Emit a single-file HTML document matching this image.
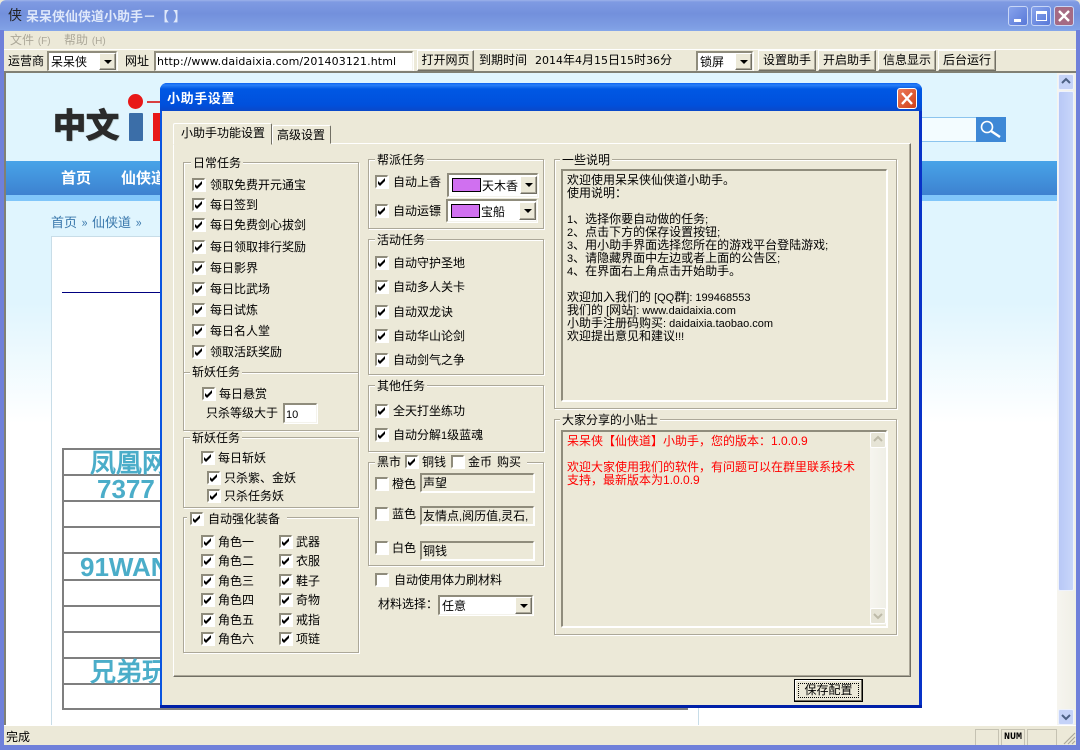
<!DOCTYPE html>
<html><head><meta charset="utf-8"><title>呆呆侠仙侠道小助手</title>
<style>
html,body{margin:0;padding:0;width:1080px;height:750px;overflow:hidden;background:#ece9d8}
body{position:relative;font:12px/14px "DejaVu Sans","WenQuanYi Zen Hei","Noto Sans CJK SC",sans-serif;color:#000}
div,span{position:absolute;box-sizing:border-box;white-space:nowrap}
u{text-decoration:none;font-family:"Liberation Sans",sans-serif;font-size:11px;line-height:1px}
.n{text-decoration:none;font-family:"DejaVu Sans",sans-serif;font-size:11px;line-height:1px}
.t{line-height:14px;height:14px}
.c{width:13px;height:13px;background:#fff;border-top:2px solid #8f8c7c;border-left:2px solid #8f8c7c;border-right:1px solid #fff;border-bottom:1px solid #fff;box-shadow:1px 1px 0 #fff}
.k::after{content:"";position:absolute;left:1px;top:1px;width:8px;height:8px;background:#000;clip-path:polygon(0 3px,2px 5px,7px 0,7px 3px,2px 8px,0 6px)}
.g{border:1px solid #aca899;box-shadow:1px 1px 0 #fff,inset 1px 1px 0 #fff}
.l{background:#ece9d8;padding:0 2px;line-height:14px;height:14px}
.b{background:#ece9d8;border:1px solid;border-color:#fff #716f64 #716f64 #fff;box-shadow:inset -1px -1px 0 #aca899;text-align:center;line-height:19px}
.s{background:#fff;border-top:2px solid #8f8c7c;border-left:2px solid #8f8c7c;border-right:1px solid #f4f3ec;border-bottom:1px solid #f4f3ec;box-shadow:1px 1px 0 #fff}
.a{background:#ece9d8;border:1px solid;border-color:#fff #716f64 #716f64 #fff;box-shadow:inset -1px -1px 0 #aca899}
.a::after{content:"";position:absolute;left:50%;top:50%;margin:-2px 0 0 -4px;border:4px solid transparent;border-top:4px solid #000;border-bottom:0}
.i{background:#ece9d8;border-top:2px solid #8f8c7c;border-left:2px solid #8f8c7c;border-right:1px solid #fff;border-bottom:1px solid #fff;box-shadow:1px 1px 0 #fff;line-height:16px;padding-left:1px}
.w{font:bold 26px/26px "Liberation Sans","WenQuanYi Zen Hei",sans-serif;color:#4badc9}
.r{left:62px;width:626px;height:2px;background:#7f7f7f}
</style></head><body>

<!-- window frame -->
<div style="left:0;top:0;width:1080px;height:31px;background:linear-gradient(#9cb2ea 0,#7f9ae2 2px,#7390dc 14px,#7f9fe4 28px,#86a8ea 31px);border-radius:6px 6px 0 0"></div>
<div style="left:0;top:30px;width:4px;height:720px;background:#6f80da"></div>
<div style="left:1076px;top:30px;width:4px;height:720px;background:#6f80da"></div>
<div style="left:0;top:745px;width:1080px;height:5px;background:#6f80da"></div>
<div class="t" style="left:8px;top:9px;font-size:14px;color:#222">侠</div>
<div class="t" style="left:26px;top:9px;font:bold 13px/14px 'WenQuanYi Zen Hei','Noto Sans CJK SC',sans-serif;color:#dfe8fa">呆呆侠仙侠道小助手－<b style="letter-spacing:4px">【】</b></div>
<div style="left:1008px;top:6px;width:20px;height:20px;border:1px solid #c8d6f6;border-radius:3px;background:linear-gradient(135deg,#87a3ec,#5878d8)"><span style="left:5px;top:12px;width:7px;height:3px;background:#fff"></span></div>
<div style="left:1031px;top:6px;width:20px;height:20px;border:1px solid #c8d6f6;border-radius:3px;background:linear-gradient(135deg,#87a3ec,#5878d8)"><span style="left:4px;top:4px;width:11px;height:10px;border:1px solid #fff;border-top:3px solid #fff"></span></div>
<div style="left:1054px;top:6px;width:20px;height:20px;border:1px solid #c8d6f6;border-radius:3px;background:#a56a84"><svg width="18" height="18" style="position:absolute;left:0;top:0"><path d="M4 4L14 14M14 4L4 14" stroke="#fff" stroke-width="2.4"/></svg></div>

<!-- menu -->
<div class="t" style="left:10px;top:33px;color:#aca899">文件 <u style="font-size:10px">(F)</u></div>
<div class="t" style="left:64px;top:33px;color:#aca899">帮助 <u style="font-size:10px">(H)</u></div>
<div style="left:4px;top:49px;width:1072px;height:1px;background:#fff"></div>

<!-- toolbar -->
<div class="t" style="left:8px;top:54px">运营商</div>
<div class="s" style="left:47px;top:51px;width:70px;height:20px"><span class="t" style="left:2px;top:2px">呆呆侠</span><span class="a" style="right:0;top:0;width:17px;height:17px"></span></div>
<div class="t" style="left:125px;top:54px">网址</div>
<div class="s" style="left:154px;top:51px;width:259px;height:20px"><span class="t" style="left:1px;top:2px;font-size:11px;letter-spacing:.1px">http://www.daidaixia.com/201403121.html</span></div>
<div class="b" style="left:417px;top:50px;width:57px;height:21px">打开网页</div>
<div class="t" style="left:479px;top:53px">到期时间</div>
<div class="t" style="left:535px;top:53px"><span class="n" style="position:static">2014</span>年<span class="n" style="position:static">4</span>月<span class="n" style="position:static">15</span>日<span class="n" style="position:static">15</span>时<span class="n" style="position:static">36</span>分</div>
<div class="s" style="left:696px;top:51px;width:57px;height:20px"><span class="t" style="left:2px;top:2px">锁屏</span><span class="a" style="right:0;top:0;width:17px;height:17px"></span></div>
<div class="b" style="left:758px;top:50px;width:58px;height:21px">设置助手</div>
<div class="b" style="left:818px;top:50px;width:58px;height:21px">开启助手</div>
<div class="b" style="left:878px;top:50px;width:58px;height:21px">信息显示</div>
<div class="b" style="left:938px;top:50px;width:58px;height:21px">后台运行</div>

<!-- web page -->
<div style="left:4px;top:71px;width:1072px;height:655px;background:#808074"></div>
<div style="left:6px;top:73px;width:1052px;height:652px;background:linear-gradient(#e0f5fe 0,#e0f5fe 230px,#fff 350px);overflow:hidden">
  <div style="left:-6px;top:-73px;width:1080px;height:750px">
    <div style="left:53px;top:103px;font:bold 33px/40px 'WenQuanYi Zen Hei','Noto Sans CJK SC',sans-serif;color:#2b2b2b;-webkit-text-stroke:1.4px #2b2b2b;text-shadow:1px 1px 1px #9aa">中文</div>
    <div style="left:128px;top:94px;width:15px;height:15px;border-radius:50%;background:#e81818"></div>
    <div style="left:129px;top:113px;width:14px;height:28px;background:#3b6ea8;border-radius:1px"></div>
    <div style="left:147px;top:101px;width:14px;height:2px;background:#d84040"></div>
    <div style="left:153px;top:113px;width:10px;height:28px;background:#e81818"></div>
    <div style="left:920px;top:117px;width:57px;height:25px;background:#f3fcff;border-top:1px solid #8cc4ee;border-bottom:1px solid #8cc4ee"></div>
    <div style="left:976px;top:117px;width:30px;height:25px;background:#3e88d6"><svg width="30" height="25" style="position:absolute;left:0;top:0"><circle cx="11" cy="10" r="5.5" fill="none" stroke="#fff" stroke-width="1.6"/><path d="M15 14L24 20" stroke="#fff" stroke-width="2.4"/></svg></div>
    <div style="left:0;top:161px;width:1080px;height:34px;background:linear-gradient(#48a4e8,#3d82d0)"></div>
    <div style="left:0;top:195px;width:1080px;height:6px;background:#80c6fa"></div>
    <div style="left:61px;top:170px;font:bold 15px/16px 'WenQuanYi Zen Hei','Noto Sans CJK SC',sans-serif;color:#fff">首页</div>
    <div style="left:121px;top:170px;font:bold 15px/16px 'WenQuanYi Zen Hei','Noto Sans CJK SC',sans-serif;color:#fff">仙侠道</div>
    <div style="left:51px;top:214px;font:13px/16px 'WenQuanYi Zen Hei','Noto Sans CJK SC',sans-serif;color:#3a78ac;word-spacing:1.5px">首页 » 仙侠道 »</div>
    <div style="left:51px;top:236px;width:648px;height:490px;background:#fff;border:1px solid #c8dde8"></div>
    <div style="left:62px;top:292px;width:300px;height:1px;background:#000080"></div>
    <div style="left:62px;top:448px;width:2px;height:262px;background:#7f7f7f"></div>
    <div class="r" style="top:448px"></div><div class="r" style="top:474px"></div><div class="r" style="top:500px"></div><div class="r" style="top:526px"></div><div class="r" style="top:552px"></div><div class="r" style="top:579px"></div><div class="r" style="top:605px"></div><div class="r" style="top:631px"></div><div class="r" style="top:657px"></div><div class="r" style="top:683px"></div><div class="r" style="top:708px"></div>
    <div class="w" style="left:90px;top:450px">凤凰网</div>
    <div class="w" style="left:97px;top:476px">7377</div>
    <div class="w" style="left:80px;top:554px">91WAN</div>
    <div class="w" style="left:90px;top:659px">兄弟玩</div>
  </div>
</div>

<!-- main scrollbar -->
<div style="left:1057px;top:73px;width:19px;height:652px;background:linear-gradient(90deg,#f6f5ef,#f0efe6)"></div>
<div style="left:1058px;top:74px;width:16px;height:16px;border:1px solid #eef2fd;border-radius:2px;background:#c5d3f8"><svg width="14" height="14" style="position:absolute;left:0;top:0"><path d="M3 8L7 4L11 8" fill="none" stroke="#4d6185" stroke-width="2"/></svg></div>
<div style="left:1058px;top:91px;width:16px;height:500px;border:1px solid #eef2fd;border-radius:2px;background:linear-gradient(90deg,#b8c8f6,#c8d6fa)"></div>
<div style="left:1058px;top:709px;width:16px;height:16px;border:1px solid #eef2fd;border-radius:2px;background:#c5d3f8"><svg width="14" height="14" style="position:absolute;left:0;top:0"><path d="M3 5L7 9L11 5" fill="none" stroke="#4d6185" stroke-width="2"/></svg></div>

<!-- status bar -->
<div style="left:4px;top:725px;width:1072px;height:1px;background:#fff"></div>
<div class="t" style="left:6px;top:730px">完成</div>
<div style="left:975px;top:729px;width:24px;height:16px;border:1px solid #c5c2b2;border-bottom:0"></div>
<div style="left:1001px;top:729px;width:24px;height:16px;border:1px solid #c5c2b2;border-bottom:0"><span class="t" style="left:2px;top:1px;font:bold 10px/14px 'Liberation Mono',monospace">NUM</span></div>
<div style="left:1027px;top:729px;width:30px;height:16px;border:1px solid #c5c2b2;border-bottom:0"></div>
<svg width="14" height="14" style="position:absolute;left:1062px;top:731px"><path d="M13 2L2 13M13 6L6 13M13 10L10 13" stroke="#aca899" stroke-width="1.2"/></svg>

<!-- dialog -->
<div style="left:160px;top:83px;width:762px;height:625px;background:#0a54e0;border-radius:7px 7px 0 0"></div>
<div style="left:160px;top:83px;width:762px;height:28px;border-radius:7px 7px 0 0;background:linear-gradient(#0a60f0 0,#2a80f8 2px,#0058e4 6px,#0050dc 22px,#0a48c8 28px)"></div>
<div style="left:919px;top:111px;width:3px;height:597px;background:#0832c8"></div>
<div style="left:160px;top:705px;width:762px;height:3px;background:#0020a8"></div>
<div class="t" style="left:167px;top:91px;font:bold 13px/14px 'WenQuanYi Zen Hei','Noto Sans CJK SC',sans-serif;letter-spacing:.6px;color:#fff">小助手设置</div>
<div style="left:897px;top:88px;width:20px;height:21px;border:1px solid #fff;border-radius:3px;background:linear-gradient(135deg,#ec7a58,#d04018)"><svg width="18" height="19" style="position:absolute;left:0;top:0"><path d="M4 4L14 15M14 4L4 15" stroke="#fff" stroke-width="2.4"/></svg></div>
<div style="left:162px;top:111px;width:757px;height:594px;background:#ece9d8"></div>

<!-- tabs -->
<div style="left:173px;top:143px;width:738px;height:534px;background:#ece9d8;border:1px solid;border-color:#fff #716f64 #716f64 #fff;box-shadow:inset -1px -1px 0 #aca899"></div>
<div style="left:272px;top:125px;width:59px;height:19px;background:#ece9d8;border:1px solid;border-color:#fff #716f64 transparent #fff;border-radius:2px 2px 0 0"></div>
<div style="left:173px;top:123px;width:99px;height:22px;background:#ece9d8;border:1px solid;border-color:#fff #716f64 transparent #fff;border-radius:2px 2px 0 0"></div>
<div class="t" style="left:181px;top:126px">小助手功能设置</div>
<div class="t" style="left:277px;top:128px">高级设置</div>

<!-- column 1 -->
<div class="g" style="left:183px;top:162px;width:176px;height:211px"></div>
<div class="l" style="left:191px;top:156px">日常任务</div>
<div class="c k" style="left:192px;top:178px"></div><div class="t" style="left:210px;top:178px">领取免费开元通宝</div>
<div class="c k" style="left:192px;top:198px"></div><div class="t" style="left:210px;top:198px">每日签到</div>
<div class="c k" style="left:192px;top:218px"></div><div class="t" style="left:210px;top:218px">每日免费剑心拔剑</div>
<div class="c k" style="left:192px;top:240px"></div><div class="t" style="left:210px;top:240px">每日领取排行奖励</div>
<div class="c k" style="left:192px;top:261px"></div><div class="t" style="left:210px;top:261px">每日影界</div>
<div class="c k" style="left:192px;top:282px"></div><div class="t" style="left:210px;top:282px">每日比武场</div>
<div class="c k" style="left:192px;top:303px"></div><div class="t" style="left:210px;top:303px">每日试炼</div>
<div class="c k" style="left:192px;top:324px"></div><div class="t" style="left:210px;top:324px">每日名人堂</div>
<div class="c k" style="left:192px;top:345px"></div><div class="t" style="left:210px;top:345px">领取活跃奖励</div>

<div class="g" style="left:183px;top:372px;width:176px;height:59px"></div>
<div class="l" style="left:190px;top:365px">斩妖任务</div>
<div class="c k" style="left:202px;top:387px"></div><div class="t" style="left:219px;top:387px">每日悬赏</div>
<div class="t" style="left:206px;top:406px">只杀等级大于</div>
<div class="s" style="left:283px;top:403px;width:34px;height:20px"><span class="t" style="left:1px;top:2px"><u>10</u></span></div>

<div class="g" style="left:183px;top:437px;width:176px;height:71px"></div>
<div class="l" style="left:190px;top:431px">斩妖任务</div>
<div class="c k" style="left:201px;top:451px"></div><div class="t" style="left:218px;top:451px">每日斩妖</div>
<div class="c k" style="left:207px;top:471px"></div><div class="t" style="left:224px;top:471px">只杀紫、金妖</div>
<div class="c k" style="left:207px;top:489px"></div><div class="t" style="left:224px;top:489px">只杀任务妖</div>

<div class="g" style="left:183px;top:517px;width:176px;height:136px"></div>
<div class="l" style="left:187px;top:512px;width:100px"></div>
<div class="c k" style="left:190px;top:512px"></div><div class="t" style="left:208px;top:512px">自动强化装备</div>
<div class="c k" style="left:201px;top:535px"></div><div class="t" style="left:218px;top:535px">角色一</div>
<div class="c k" style="left:201px;top:554px"></div><div class="t" style="left:218px;top:554px">角色二</div>
<div class="c k" style="left:201px;top:574px"></div><div class="t" style="left:218px;top:574px">角色三</div>
<div class="c k" style="left:201px;top:593px"></div><div class="t" style="left:218px;top:593px">角色四</div>
<div class="c k" style="left:201px;top:613px"></div><div class="t" style="left:218px;top:613px">角色五</div>
<div class="c k" style="left:201px;top:632px"></div><div class="t" style="left:218px;top:632px">角色六</div>
<div class="c k" style="left:279px;top:535px"></div><div class="t" style="left:296px;top:535px">武器</div>
<div class="c k" style="left:279px;top:554px"></div><div class="t" style="left:296px;top:554px">衣服</div>
<div class="c k" style="left:279px;top:574px"></div><div class="t" style="left:296px;top:574px">鞋子</div>
<div class="c k" style="left:279px;top:593px"></div><div class="t" style="left:296px;top:593px">奇物</div>
<div class="c k" style="left:279px;top:613px"></div><div class="t" style="left:296px;top:613px">戒指</div>
<div class="c k" style="left:279px;top:632px"></div><div class="t" style="left:296px;top:632px">项链</div>

<!-- column 2 -->
<div class="g" style="left:368px;top:159px;width:176px;height:70px"></div>
<div class="l" style="left:375px;top:153px">帮派任务</div>
<div class="c k" style="left:375px;top:175px"></div><div class="t" style="left:393px;top:175px">自动上香</div>
<div class="s" style="left:447px;top:173px;width:91px;height:24px"><span style="left:3px;top:3px;width:29px;height:14px;background:#d070f0;border:1px solid #000"></span><span class="t" style="left:33px;top:4px">天木香</span><span class="a" style="right:0;top:1px;width:17px;height:18px"></span></div>
<div class="c k" style="left:375px;top:204px"></div><div class="t" style="left:393px;top:204px">自动运镖</div>
<div class="s" style="left:446px;top:199px;width:91px;height:23px"><span style="left:3px;top:3px;width:29px;height:14px;background:#d070f0;border:1px solid #000"></span><span class="t" style="left:33px;top:4px">宝船</span><span class="a" style="right:0;top:1px;width:17px;height:18px"></span></div>

<div class="g" style="left:368px;top:239px;width:176px;height:136px"></div>
<div class="l" style="left:375px;top:233px">活动任务</div>
<div class="c k" style="left:375px;top:256px"></div><div class="t" style="left:393px;top:256px">自动守护圣地</div>
<div class="c k" style="left:375px;top:280px"></div><div class="t" style="left:393px;top:280px">自动多人关卡</div>
<div class="c k" style="left:375px;top:305px"></div><div class="t" style="left:393px;top:305px">自动双龙诀</div>
<div class="c k" style="left:375px;top:329px"></div><div class="t" style="left:393px;top:329px">自动华山论剑</div>
<div class="c k" style="left:375px;top:353px"></div><div class="t" style="left:393px;top:353px">自动剑气之争</div>

<div class="g" style="left:368px;top:385px;width:176px;height:67px"></div>
<div class="l" style="left:375px;top:379px">其他任务</div>
<div class="c k" style="left:375px;top:404px"></div><div class="t" style="left:393px;top:404px">全天打坐练功</div>
<div class="c k" style="left:375px;top:428px"></div><div class="t" style="left:393px;top:428px">自动分解<u>1</u>级蓝魂</div>

<div class="g" style="left:368px;top:462px;width:176px;height:104px"></div>
<div class="l" style="left:375px;top:455px;width:152px"></div>
<div class="t" style="left:377px;top:455px">黑市</div>
<div class="c k" style="left:405px;top:455px"></div><div class="t" style="left:422px;top:455px">铜钱</div>
<div class="c" style="left:451px;top:455px"></div><div class="t" style="left:468px;top:455px">金币</div>
<div class="t" style="left:497px;top:455px">购买</div>
<div class="c" style="left:375px;top:477px"></div><div class="t" style="left:392px;top:477px">橙色</div>
<div class="i" style="left:420px;top:473px;width:114px;height:19px">声望</div>
<div class="c" style="left:375px;top:507px"></div><div class="t" style="left:392px;top:507px">蓝色</div>
<div class="i" style="left:420px;top:506px;width:114px;height:19px;overflow:hidden">友情点<u>,</u>阅历值<u>,</u>灵石<u>,</u></div>
<div class="c" style="left:375px;top:541px"></div><div class="t" style="left:392px;top:541px">白色</div>
<div class="i" style="left:420px;top:541px;width:114px;height:19px">铜钱</div>
<div class="c" style="left:375px;top:573px"></div><div class="t" style="left:394px;top:573px">自动使用体力刷材料</div>
<div class="t" style="left:378px;top:597px">材料选择：</div>
<div class="s" style="left:438px;top:595px;width:95px;height:20px"><span class="t" style="left:2px;top:2px">任意</span><span class="a" style="right:0;top:0;width:17px;height:17px"></span></div>

<!-- column 3 -->
<div class="g" style="left:554px;top:159px;width:343px;height:250px"></div>
<div class="l" style="left:560px;top:153px">一些说明</div>
<div class="i" style="left:561px;top:169px;width:326px;height:232px;padding:3px 0 0 4px;line-height:13px">欢迎使用呆呆侠仙侠道小助手。<br>使用说明：<br><br><u>1</u>、选择你要自动做的任务<u>;</u><br><u>2</u>、点击下方的保存设置按钮<u>;</u><br><u>3</u>、用小助手界面选择您所在的游戏平台登陆游戏<u>;</u><br><u>3</u>、请隐藏界面中左边或者上面的公告区<u>;</u><br><u>4</u>、在界面右上角点击开始助手。<br><br>欢迎加入我们的<u> [QQ</u>群<u>]: 199468553</u><br>我们的<u> [</u>网站<u>]: www.daidaixia.com</u><br>小助手注册码购买<u>: daidaixia.taobao.com</u><br>欢迎提出意见和建议<u>!!!</u></div>

<div class="g" style="left:554px;top:419px;width:343px;height:216px"></div>
<div class="l" style="left:560px;top:413px">大家分享的小贴士</div>
<div class="i" style="left:561px;top:430px;width:326px;height:197px;padding:3px 0 0 4px;line-height:13px;color:#f00">呆呆侠【仙侠道】小助手，您的版本：<u style="font-size:12px">1.0.0.9</u><br><br>欢迎大家使用我们的软件，有问题可以在群里联系技术<br>支持，最新版本为<u style="font-size:12px">1.0.0.9</u></div>
<div style="left:870px;top:432px;width:16px;height:193px;background:linear-gradient(90deg,#f6f5ef,#f0efe6)"></div>
<div style="left:870px;top:432px;width:16px;height:16px;background:#e6e4d6;border:1px solid #fff;border-radius:2px"><svg width="14" height="14" style="position:absolute;left:0;top:0"><path d="M3 8L7 4L11 8" fill="none" stroke="#bdbaa8" stroke-width="2"/></svg></div>
<div style="left:870px;top:608px;width:16px;height:16px;background:#e6e4d6;border:1px solid #fff;border-radius:2px"><svg width="14" height="14" style="position:absolute;left:0;top:0"><path d="M3 5L7 9L11 5" fill="none" stroke="#bdbaa8" stroke-width="2"/></svg></div>

<!-- save button -->
<div style="left:794px;top:679px;width:69px;height:23px;background:#ece9d8;border:1px solid #000;box-shadow:inset -1px -1px 0 #716f64,inset 1px 1px 0 #fff;text-align:center;line-height:20px"><span style="left:3px;top:3px;width:61px;height:15px;border:1px dotted #000"></span>保存配置</div>

</body></html>
